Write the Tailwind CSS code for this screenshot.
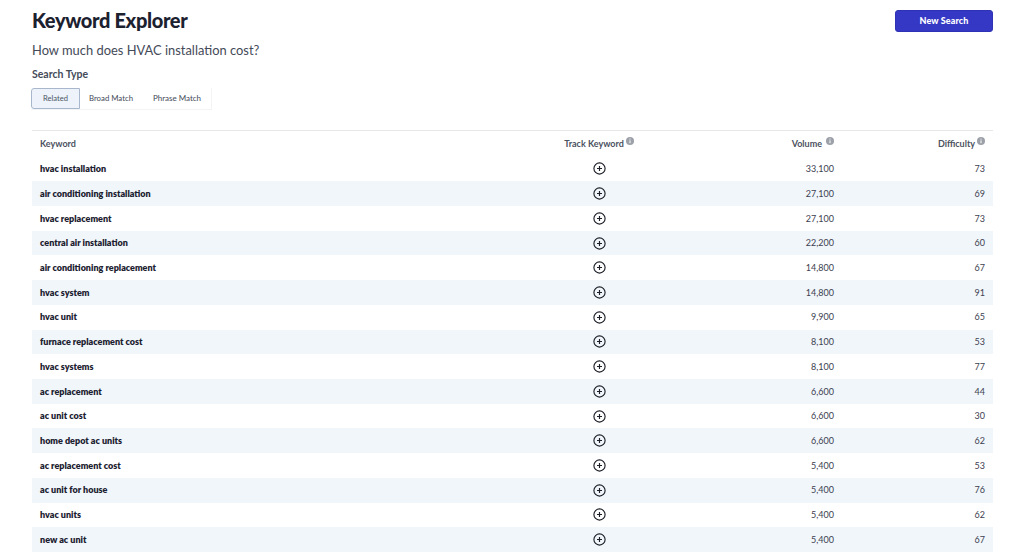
<!doctype html>
<html lang="en">
<head>
<meta charset="utf-8">
<title>Keyword Explorer</title>
<script src="https://cdn.jsdelivr.net/npm/@tailwindcss/browser@4"></script>
</head>
<body class="bg-white font-['Lato','Liberation_Sans',sans-serif] text-[#1c2130] overflow-hidden">
<div class="w-[1024px] h-[557px] overflow-hidden pl-8 pr-[31px] pt-[10px]">
  <!-- page heading -->
  <div class="flex items-start justify-between h-[22px]">
    <h1 class="text-[20px] leading-[20px] font-black tracking-[-0.35px]">Keyword Explorer</h1>
    <button class="w-[98px] h-[22px] rounded-[3px] bg-[#3538c4] border border-[#2f32b4] text-white text-[9px] font-black tracking-[0.1px]">New Search</button>
  </div>
  <p class="mt-[10px] text-[12.9px] leading-[16px] text-[#444a58]">How much does HVAC installation cost?</p>
  <p class="mt-[10px] text-[10.5px] leading-[13px] font-bold text-[#444a58]">Search Type</p>
  <!-- search type tabs -->
  <div class="mt-[7px] -ml-px flex h-[22px] w-[181px] text-[8px] text-[#444a58] border-r border-b border-[#f3f4f6]">
    <div class="w-[49px] flex items-center justify-center rounded-l-[3px] border border-[#a9b7cc] bg-[#eef3fb] text-[#4b5565] text-[7.6px]">Related</div>
    <div class="w-[63px] pr-[1px] flex items-center justify-center text-[7.8px]">Broad Match</div>
    <div class="flex-1 pb-px flex items-center justify-center">Phrase Match</div>
  </div>
  <!-- keyword table -->
  <table class="mt-[20px] w-[961px] table-fixed border-t border-[#e5e7eb] text-[9px]">
    <colgroup>
      <col class="w-[450px]"><col class="w-[234px]"><col class="w-[118px]"><col>
    </colgroup>
    <thead class="text-[#4b5160] font-bold">
      <tr class="h-[26px]">
        <th class="pl-2 pb-px text-left font-bold">Keyword</th>
        <th class="pb-px font-bold"><span class="inline-flex items-center gap-[2px]">Track Keyword <svg class="size-[8px] -mt-[4px]" viewBox="0 0 8 8"><circle cx="4" cy="4" r="4" fill="#9ca0a8"/><path d="M4 3.4v2.8M4 1.6v1" stroke="#fff" stroke-width="1"/></svg></span></th>
        <th class="pb-px font-bold text-right"><span class="inline-flex items-center gap-[4px]">Volume <svg class="size-[8px] -mt-[4px]" viewBox="0 0 8 8"><circle cx="4" cy="4" r="4" fill="#9ca0a8"/><path d="M4 3.4v2.8M4 1.6v1" stroke="#fff" stroke-width="1"/></svg></span></th>
        <th class="pr-2 pb-px font-bold text-right"><span class="inline-flex items-center gap-[2px]">Difficulty <svg class="size-[8px] -mt-[4px]" viewBox="0 0 8 8"><circle cx="4" cy="4" r="4" fill="#9ca0a8"/><path d="M4 3.4v2.8M4 1.6v1" stroke="#fff" stroke-width="1"/></svg></span></th>
      </tr>
    </thead>
    <tbody id="rows">
      <tr class="h-[24.73px]"><td class="pl-2 font-extrabold">hvac installation</td><td><svg class="mx-auto size-[13px]" viewBox="0 0 13 13" fill="none" stroke="#1c1f27" stroke-width="1.15"><circle cx="6.5" cy="6.5" r="5.6"/><path d="M6.5 4v5M4 6.5h5"/></svg></td><td class="text-right text-[#3c4150]">33,100</td><td class="pr-2 text-right text-[#3c4150]">73</td></tr>
      <tr class="h-[24.73px] bg-[#f1f6fb]"><td class="pl-2 font-extrabold">air conditioning installation</td><td><svg class="mx-auto size-[13px]" viewBox="0 0 13 13" fill="none" stroke="#1c1f27" stroke-width="1.15"><circle cx="6.5" cy="6.5" r="5.6"/><path d="M6.5 4v5M4 6.5h5"/></svg></td><td class="text-right text-[#3c4150]">27,100</td><td class="pr-2 text-right text-[#3c4150]">69</td></tr>
      <tr class="h-[24.73px]"><td class="pl-2 font-extrabold">hvac replacement</td><td><svg class="mx-auto size-[13px]" viewBox="0 0 13 13" fill="none" stroke="#1c1f27" stroke-width="1.15"><circle cx="6.5" cy="6.5" r="5.6"/><path d="M6.5 4v5M4 6.5h5"/></svg></td><td class="text-right text-[#3c4150]">27,100</td><td class="pr-2 text-right text-[#3c4150]">73</td></tr>
      <tr class="h-[24.73px] bg-[#f1f6fb]"><td class="pl-2 font-extrabold">central air installation</td><td><svg class="mx-auto size-[13px]" viewBox="0 0 13 13" fill="none" stroke="#1c1f27" stroke-width="1.15"><circle cx="6.5" cy="6.5" r="5.6"/><path d="M6.5 4v5M4 6.5h5"/></svg></td><td class="text-right text-[#3c4150]">22,200</td><td class="pr-2 text-right text-[#3c4150]">60</td></tr>
      <tr class="h-[24.73px]"><td class="pl-2 font-extrabold">air conditioning replacement</td><td><svg class="mx-auto size-[13px]" viewBox="0 0 13 13" fill="none" stroke="#1c1f27" stroke-width="1.15"><circle cx="6.5" cy="6.5" r="5.6"/><path d="M6.5 4v5M4 6.5h5"/></svg></td><td class="text-right text-[#3c4150]">14,800</td><td class="pr-2 text-right text-[#3c4150]">67</td></tr>
      <tr class="h-[24.73px] bg-[#f1f6fb]"><td class="pl-2 font-extrabold">hvac system</td><td><svg class="mx-auto size-[13px]" viewBox="0 0 13 13" fill="none" stroke="#1c1f27" stroke-width="1.15"><circle cx="6.5" cy="6.5" r="5.6"/><path d="M6.5 4v5M4 6.5h5"/></svg></td><td class="text-right text-[#3c4150]">14,800</td><td class="pr-2 text-right text-[#3c4150]">91</td></tr>
      <tr class="h-[24.73px]"><td class="pl-2 font-extrabold">hvac unit</td><td><svg class="mx-auto size-[13px]" viewBox="0 0 13 13" fill="none" stroke="#1c1f27" stroke-width="1.15"><circle cx="6.5" cy="6.5" r="5.6"/><path d="M6.5 4v5M4 6.5h5"/></svg></td><td class="text-right text-[#3c4150]">9,900</td><td class="pr-2 text-right text-[#3c4150]">65</td></tr>
      <tr class="h-[24.73px] bg-[#f1f6fb]"><td class="pl-2 font-extrabold">furnace replacement cost</td><td><svg class="mx-auto size-[13px]" viewBox="0 0 13 13" fill="none" stroke="#1c1f27" stroke-width="1.15"><circle cx="6.5" cy="6.5" r="5.6"/><path d="M6.5 4v5M4 6.5h5"/></svg></td><td class="text-right text-[#3c4150]">8,100</td><td class="pr-2 text-right text-[#3c4150]">53</td></tr>
      <tr class="h-[24.73px]"><td class="pl-2 font-extrabold">hvac systems</td><td><svg class="mx-auto size-[13px]" viewBox="0 0 13 13" fill="none" stroke="#1c1f27" stroke-width="1.15"><circle cx="6.5" cy="6.5" r="5.6"/><path d="M6.5 4v5M4 6.5h5"/></svg></td><td class="text-right text-[#3c4150]">8,100</td><td class="pr-2 text-right text-[#3c4150]">77</td></tr>
      <tr class="h-[24.73px] bg-[#f1f6fb]"><td class="pl-2 font-extrabold">ac replacement</td><td><svg class="mx-auto size-[13px]" viewBox="0 0 13 13" fill="none" stroke="#1c1f27" stroke-width="1.15"><circle cx="6.5" cy="6.5" r="5.6"/><path d="M6.5 4v5M4 6.5h5"/></svg></td><td class="text-right text-[#3c4150]">6,600</td><td class="pr-2 text-right text-[#3c4150]">44</td></tr>
      <tr class="h-[24.73px]"><td class="pl-2 font-extrabold">ac unit cost</td><td><svg class="mx-auto size-[13px]" viewBox="0 0 13 13" fill="none" stroke="#1c1f27" stroke-width="1.15"><circle cx="6.5" cy="6.5" r="5.6"/><path d="M6.5 4v5M4 6.5h5"/></svg></td><td class="text-right text-[#3c4150]">6,600</td><td class="pr-2 text-right text-[#3c4150]">30</td></tr>
      <tr class="h-[24.73px] bg-[#f1f6fb]"><td class="pl-2 font-extrabold">home depot ac units</td><td><svg class="mx-auto size-[13px]" viewBox="0 0 13 13" fill="none" stroke="#1c1f27" stroke-width="1.15"><circle cx="6.5" cy="6.5" r="5.6"/><path d="M6.5 4v5M4 6.5h5"/></svg></td><td class="text-right text-[#3c4150]">6,600</td><td class="pr-2 text-right text-[#3c4150]">62</td></tr>
      <tr class="h-[24.73px]"><td class="pl-2 font-extrabold">ac replacement cost</td><td><svg class="mx-auto size-[13px]" viewBox="0 0 13 13" fill="none" stroke="#1c1f27" stroke-width="1.15"><circle cx="6.5" cy="6.5" r="5.6"/><path d="M6.5 4v5M4 6.5h5"/></svg></td><td class="text-right text-[#3c4150]">5,400</td><td class="pr-2 text-right text-[#3c4150]">53</td></tr>
      <tr class="h-[24.73px] bg-[#f1f6fb]"><td class="pl-2 font-extrabold">ac unit for house</td><td><svg class="mx-auto size-[13px]" viewBox="0 0 13 13" fill="none" stroke="#1c1f27" stroke-width="1.15"><circle cx="6.5" cy="6.5" r="5.6"/><path d="M6.5 4v5M4 6.5h5"/></svg></td><td class="text-right text-[#3c4150]">5,400</td><td class="pr-2 text-right text-[#3c4150]">76</td></tr>
      <tr class="h-[24.73px]"><td class="pl-2 font-extrabold">hvac units</td><td><svg class="mx-auto size-[13px]" viewBox="0 0 13 13" fill="none" stroke="#1c1f27" stroke-width="1.15"><circle cx="6.5" cy="6.5" r="5.6"/><path d="M6.5 4v5M4 6.5h5"/></svg></td><td class="text-right text-[#3c4150]">5,400</td><td class="pr-2 text-right text-[#3c4150]">62</td></tr>
      <tr class="h-[24.73px] bg-[#f1f6fb]"><td class="pl-2 font-extrabold">new ac unit</td><td><svg class="mx-auto size-[13px]" viewBox="0 0 13 13" fill="none" stroke="#1c1f27" stroke-width="1.15"><circle cx="6.5" cy="6.5" r="5.6"/><path d="M6.5 4v5M4 6.5h5"/></svg></td><td class="text-right text-[#3c4150]">5,400</td><td class="pr-2 text-right text-[#3c4150]">67</td></tr>
    </tbody>
  </table>
</div>
</body>
</html>
